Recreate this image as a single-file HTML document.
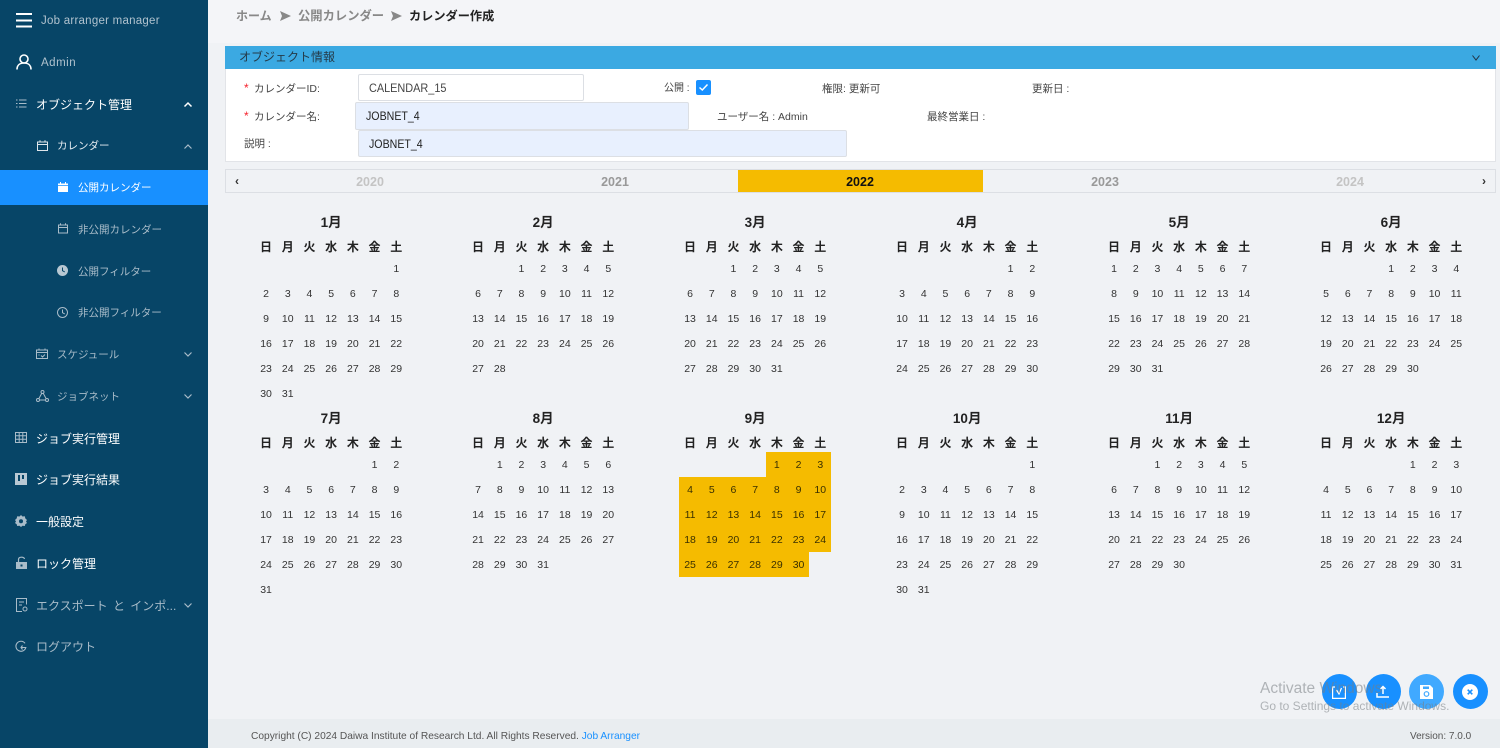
<!DOCTYPE html>
<html lang="ja"><head><meta charset="utf-8"><title>カレンダー作成</title>
<style>
*{box-sizing:border-box}
html,body{margin:0;padding:0;width:1500px;height:748px;overflow:hidden;background:#f0f2f5;font-family:"Liberation Sans","Noto Sans CJK JP",sans-serif;color:#333}
.a{position:absolute;white-space:nowrap}
#side{position:absolute;left:0;top:0;width:208px;height:748px;background:#074567}
.t{position:absolute;white-space:nowrap;line-height:20px;height:18px;font-size:10.5px;color:#a9bcc9}
.w{color:#fff}
.b{font-size:12px}
#active{position:absolute;left:0;top:170px;width:208px;height:35px;background:#1890ff}
svg{position:absolute;overflow:visible}
.m{position:absolute;width:152px}
.mt{height:24px;line-height:26px;text-align:center;font-size:13.5px;font-weight:700;color:#222}
.g{display:grid;grid-template-columns:repeat(7,21.71px);grid-auto-rows:25px;font-size:10.5px;color:#333}
.g i{font-style:normal;display:block;text-align:center;line-height:27px;height:25px}
.hd{margin-top:2.5px;height:19px;grid-auto-rows:19px;font-size:12px;font-weight:700;color:#222}
.hd i{line-height:21px;height:19px}
.h i{background:#f5bb00;color:#3a3000}
.inp{position:absolute;border:1px solid #dcdfe4;border-radius:2px;background:#fff;font-size:12px;line-height:27px;padding-left:10px;color:#444}
.inp span{display:inline-block;transform-origin:0 50%}
.inp.f{background:#e8f0fe;color:#222}
.lab{position:absolute;white-space:nowrap;font-size:10.5px;color:#444;line-height:18px}
.lab b{font-weight:400;color:#f5222d;display:inline-block;width:10px;font-size:12px}
.yr{position:absolute;top:173px;width:100px;text-align:center;font-size:12.5px;font-weight:700;line-height:18px}
.fab{position:absolute;top:674px;width:35px;height:35px;border-radius:50%;background:#1890ff}
</style></head><body>
<div id="side">
<div id="active"></div>
<svg style="left:16px;top:13px" width="16" height="14" fill="none" stroke="#fff" stroke-width="2"><path d="M0 1H16M0 7.500H16M0 13.500H16"/></svg>
<div class="t" style="left:41px;top:11px;letter-spacing:.25px;font-size:11.5px;color:#b0c2ce">Job arranger manager</div>
<svg style="left:16px;top:54px" width="16" height="16" fill="none" stroke="#fff" stroke-width="1.600"><circle cx="8" cy="5" r="4"/><path d="M1 15.500C1 11 4 9 8 9s7 2 7 6.500"/></svg>
<div class="t" style="left:41px;top:53px;letter-spacing:.5px;font-size:11.5px;color:#b0c2ce">Admin</div>
<svg style="left:16px;top:99px" width="11" height="9" fill="none" stroke="#a9bcc9" stroke-width="1"><path d="M3 1H10.500M3 4.500H10.500M3 8H10.500M0 1H1.500M0 4.500H1.500M0 8H1.500"/></svg>
<div class="t w b" style="left:36px;top:94.500px">オブジェクト管理</div>
<svg style="left:184px;top:102px" width="8" height="5" fill="none" stroke="#fff" stroke-width="1.500"><path d="M.5 4.500L4 1L7.500 4.500"/></svg>
<svg style="left:37px;top:140px" width="11" height="11" fill="none" stroke="#dfe6eb" stroke-width="1"><path d="M.5 2H10.500V10.500H.5ZM.5 4.500H10.500M3 .2V2M8 .2V2"/></svg>
<div class="t w" style="left:57px;top:136px;color:#e4ebf0">カレンダー</div>
<svg style="left:184px;top:144px" width="8" height="5" fill="none" stroke="#a9bcc9" stroke-width="1.200"><path d="M.5 4.500L4 1L7.500 4.500"/></svg>
<svg style="left:58px;top:182px" width="10" height="10"><path d="M0 1.500H10V3.200H0ZM0 4H10V10H0ZM2 0H3V2H2ZM7 0H8V2H7Z" fill="#fff"/></svg>
<div class="t w" style="left:78px;top:178px">公開カレンダー</div>
<svg style="left:58px;top:223px" width="10" height="11" fill="none" stroke="#a9bcc9" stroke-width="1"><path d="M.5 2H9.500V10H.5ZM.5 4.500H9.500M2.500 .2V2M7.500 .2V2"/></svg>
<div class="t" style="left:78px;top:220px">非公開カレンダー</div>
<svg style="left:57px;top:265px" width="11" height="11"><circle cx="5.500" cy="5.500" r="5.500" fill="#b8c8d3"/><path d="M5.500 2.500V5.700L7.800 7" stroke="#074567" fill="none"/></svg>
<div class="t" style="left:78px;top:262px">公開フィルター</div>
<svg style="left:57px;top:307px" width="11" height="11" fill="none" stroke="#a9bcc9" stroke-width="1"><circle cx="5.500" cy="5.500" r="5"/><path d="M5.500 2.500V5.700L7.800 7"/></svg>
<div class="t" style="left:78px;top:303px">非公開フィルター</div>
<svg style="left:36px;top:348px" width="12" height="12" fill="none" stroke="#a9bcc9" stroke-width="1"><path d="M.5 2H11.500V10.500H.5ZM.5 4.500H11.500M3 .5V2.500M9 .5V2.500M5 7.500L6.500 9L9 6.500M2.500 7H3.500"/></svg>
<div class="t" style="left:57px;top:345px">スケジュール</div>
<svg style="left:184px;top:352px" width="8" height="5" fill="none" stroke="#a9bcc9" stroke-width="1.200"><path d="M.5.5L4 4L7.500.5"/></svg>
<svg style="left:36px;top:390px" width="13" height="12" fill="none" stroke="#a9bcc9" stroke-width="1"><circle cx="6.500" cy="2" r="1.500"/><circle cx="2" cy="10" r="1.500"/><circle cx="11" cy="10" r="1.500"/><path d="M5.800 3.300L2.800 8.700M7.200 3.300L10.200 8.700M3.500 10H9.500"/></svg>
<div class="t" style="left:57px;top:387px">ジョブネット</div>
<svg style="left:184px;top:394px" width="8" height="5" fill="none" stroke="#a9bcc9" stroke-width="1.200"><path d="M.5.5L4 4L7.500.5"/></svg>
<svg style="left:15px;top:432px" width="12" height="11" fill="none" stroke="#a9bcc9" stroke-width="1"><path d="M.5.500H11.500V10.500H.5ZM.5 3.800H11.500M.5 7.200H11.500M4.200 .5V10.500M7.800 .5V10.500"/></svg>
<div class="t w b" style="left:36px;top:429px">ジョブ実行管理</div>
<svg style="left:15px;top:473px" width="12" height="12"><path d="M0 0H12V12H0Z" fill="#b8c8d3"/><path d="M3 2H5V8H3ZM7 2H9V6H7Z" fill="#074567"/></svg>
<div class="t w b" style="left:36px;top:470px">ジョブ実行結果</div>
<svg style="left:15px;top:515px" width="12" height="12"><path d="M6 0L7.500 1.500L9.800 1.200L10.300 3.400L12 5L11 6.500L12 8L10.300 9.200L9.800 11L7.500 10.700L6 12L4.500 10.700L2.200 11L1.700 9.200L0 8L1 6.500L0 5L1.700 3.400L2.200 1.200L4.500 1.500Z" fill="#a9bcc9"/><circle cx="6" cy="6.300" r="2" fill="#074567"/></svg>
<div class="t w b" style="left:36px;top:512px">一般設定</div>
<svg style="left:16px;top:556px" width="11" height="13"><path d="M0 6H11V13H0Z" fill="#a9bcc9"/><path d="M2.500 6V3.500C2.500 .5 8 .5 8.500 3" fill="none" stroke="#a9bcc9" stroke-width="1.200"/><rect x="4.500" y="8.500" width="2" height="2" fill="#074567"/></svg>
<div class="t w b" style="left:36px;top:554px">ロック管理</div>
<svg style="left:16px;top:598px" width="12" height="14" fill="none" stroke="#a9bcc9" stroke-width="1"><path d="M10.500 6.500V.5H.5V13.500H6M3 4H8M3 7H6"/><circle cx="9" cy="11" r="2"/></svg>
<div class="t b" style="left:36px;top:596px;word-spacing:2px">エクスポート と インポ...</div>
<svg style="left:184px;top:603px" width="8" height="5" fill="none" stroke="#a9bcc9" stroke-width="1.200"><path d="M.5.5L4 4L7.500.5"/></svg>
<svg style="left:15px;top:641px" width="12" height="11" fill="none" stroke="#a9bcc9" stroke-width="1.100"><path d="M10 2.300A5 5 0 1 0 10.800 6.500H6M7.500 4.500L6 6.500L7.500 8.500"/></svg>
<div class="t b" style="left:36px;top:637px">ログアウト</div>
</div>

<div class="a" style="left:208px;top:0;width:1292px;height:43px;background:#f4f5f8"></div>
<div class="a" style="left:236px;top:8px;font-size:12px;line-height:17px;color:#888;font-weight:700">ホーム</div>
<svg style="left:280px;top:11px" width="11" height="10"><path d="M0 0L11 5L0 10L2 5Z" fill="#888"/></svg>
<div class="a" style="left:298px;top:8px;font-size:12.300px;line-height:17px;color:#888;font-weight:700">公開カレンダー</div>
<svg style="left:391px;top:11px" width="11" height="10"><path d="M0 0L11 5L0 10L2 5Z" fill="#888"/></svg>
<div class="a" style="left:409px;top:8px;font-size:12.200px;line-height:17px;color:#222;font-weight:700">カレンダー作成</div>

<div class="a" style="left:225px;top:46px;width:1271px;height:116px;background:#fff;border:1px solid #e2e4e8;border-top:0"></div>
<div class="a" style="left:225px;top:46px;width:1271px;height:23px;background:#3ba9e2;font-size:12px;line-height:22px;padding-left:14px;color:#243a48">オブジェクト情報</div>
<svg style="left:1472px;top:55px" width="8" height="6" fill="none" stroke="#234" stroke-width="1"><path d="M.5.5L4 5L7.500.5"/></svg>
<div class="lab" style="left:244px;top:79px"><b>*</b>カレンダーID:</div>
<div class="lab" style="left:244px;top:107px"><b>*</b>カレンダー名:</div>
<div class="lab" style="left:244px;top:135px">説明 :</div>
<div class="inp" style="left:358px;top:74px;width:226px;height:27px"><span style="transform:scaleX(.907)">CALENDAR_15</span></div>
<div class="inp f" style="left:355px;top:102px;width:334px;height:28px"><span style="transform:scaleX(.885)">JOBNET_4</span></div>
<div class="inp f" style="left:358px;top:130px;width:489px;height:27px"><span style="transform:scaleX(.885)">JOBNET_4</span></div>
<div class="lab" style="left:664px;top:80px;font-size:10px">公開 :</div>
<div class="a" style="left:696px;top:80px;width:15px;height:15px;background:#1890ff;border-radius:2px"></div>
<svg style="left:699px;top:84px" width="9" height="7" fill="none" stroke="#fff" stroke-width="1.500"><path d="M.5 3.500L3.300 6L8.500.5"/></svg>
<div class="lab" style="left:822px;top:80px;font-size:10.500px">権限: 更新可</div>
<div class="lab" style="left:1032px;top:80px;font-size:10.500px">更新日 :</div>
<div class="lab" style="left:717px;top:108px;font-size:10.500px">ユーザー名 : Admin</div>
<div class="lab" style="left:927px;top:108px;font-size:10.500px">最終営業日 :</div>

<div class="a" style="left:225px;top:169px;width:1271px;height:24px;border:1px solid #dcdfe4"></div>
<div class="a" style="left:738px;top:170px;width:245px;height:22px;background:#f5bb00"></div>
<div class="a" style="left:235px;top:172px;font-size:12px;line-height:18px;font-weight:700;color:#333">‹</div>
<div class="a" style="left:1482px;top:172px;font-size:12px;line-height:18px;font-weight:700;color:#333">›</div>
<div class="yr" style="left:320px;color:#c4c4c4">2020</div>
<div class="yr" style="left:565px;color:#999">2021</div>
<div class="yr" style="left:810px;color:#111">2022</div>
<div class="yr" style="left:1055px;color:#999">2023</div>
<div class="yr" style="left:1300px;color:#c4c4c4">2024</div>

<div class="m" style="left:255.200px;top:210px"><div class="mt">1月</div><div class="g hd"><i>日</i><i>月</i><i>火</i><i>水</i><i>木</i><i>金</i><i>土</i></div><div class="g"><i style="grid-column-start:7">1</i><i>2</i><i>3</i><i>4</i><i>5</i><i>6</i><i>7</i><i>8</i><i>9</i><i>10</i><i>11</i><i>12</i><i>13</i><i>14</i><i>15</i><i>16</i><i>17</i><i>18</i><i>19</i><i>20</i><i>21</i><i>22</i><i>23</i><i>24</i><i>25</i><i>26</i><i>27</i><i>28</i><i>29</i><i>30</i><i>31</i></div></div>
<div class="m" style="left:467.200px;top:210px"><div class="mt">2月</div><div class="g hd"><i>日</i><i>月</i><i>火</i><i>水</i><i>木</i><i>金</i><i>土</i></div><div class="g"><i style="grid-column-start:3">1</i><i>2</i><i>3</i><i>4</i><i>5</i><i>6</i><i>7</i><i>8</i><i>9</i><i>10</i><i>11</i><i>12</i><i>13</i><i>14</i><i>15</i><i>16</i><i>17</i><i>18</i><i>19</i><i>20</i><i>21</i><i>22</i><i>23</i><i>24</i><i>25</i><i>26</i><i>27</i><i>28</i></div></div>
<div class="m" style="left:679.200px;top:210px"><div class="mt">3月</div><div class="g hd"><i>日</i><i>月</i><i>火</i><i>水</i><i>木</i><i>金</i><i>土</i></div><div class="g"><i style="grid-column-start:3">1</i><i>2</i><i>3</i><i>4</i><i>5</i><i>6</i><i>7</i><i>8</i><i>9</i><i>10</i><i>11</i><i>12</i><i>13</i><i>14</i><i>15</i><i>16</i><i>17</i><i>18</i><i>19</i><i>20</i><i>21</i><i>22</i><i>23</i><i>24</i><i>25</i><i>26</i><i>27</i><i>28</i><i>29</i><i>30</i><i>31</i></div></div>
<div class="m" style="left:891.200px;top:210px"><div class="mt">4月</div><div class="g hd"><i>日</i><i>月</i><i>火</i><i>水</i><i>木</i><i>金</i><i>土</i></div><div class="g"><i style="grid-column-start:6">1</i><i>2</i><i>3</i><i>4</i><i>5</i><i>6</i><i>7</i><i>8</i><i>9</i><i>10</i><i>11</i><i>12</i><i>13</i><i>14</i><i>15</i><i>16</i><i>17</i><i>18</i><i>19</i><i>20</i><i>21</i><i>22</i><i>23</i><i>24</i><i>25</i><i>26</i><i>27</i><i>28</i><i>29</i><i>30</i></div></div>
<div class="m" style="left:1103.200px;top:210px"><div class="mt">5月</div><div class="g hd"><i>日</i><i>月</i><i>火</i><i>水</i><i>木</i><i>金</i><i>土</i></div><div class="g"><i>1</i><i>2</i><i>3</i><i>4</i><i>5</i><i>6</i><i>7</i><i>8</i><i>9</i><i>10</i><i>11</i><i>12</i><i>13</i><i>14</i><i>15</i><i>16</i><i>17</i><i>18</i><i>19</i><i>20</i><i>21</i><i>22</i><i>23</i><i>24</i><i>25</i><i>26</i><i>27</i><i>28</i><i>29</i><i>30</i><i>31</i></div></div>
<div class="m" style="left:1315.200px;top:210px"><div class="mt">6月</div><div class="g hd"><i>日</i><i>月</i><i>火</i><i>水</i><i>木</i><i>金</i><i>土</i></div><div class="g"><i style="grid-column-start:4">1</i><i>2</i><i>3</i><i>4</i><i>5</i><i>6</i><i>7</i><i>8</i><i>9</i><i>10</i><i>11</i><i>12</i><i>13</i><i>14</i><i>15</i><i>16</i><i>17</i><i>18</i><i>19</i><i>20</i><i>21</i><i>22</i><i>23</i><i>24</i><i>25</i><i>26</i><i>27</i><i>28</i><i>29</i><i>30</i></div></div>
<div class="m" style="left:255.200px;top:406px"><div class="mt">7月</div><div class="g hd"><i>日</i><i>月</i><i>火</i><i>水</i><i>木</i><i>金</i><i>土</i></div><div class="g"><i style="grid-column-start:6">1</i><i>2</i><i>3</i><i>4</i><i>5</i><i>6</i><i>7</i><i>8</i><i>9</i><i>10</i><i>11</i><i>12</i><i>13</i><i>14</i><i>15</i><i>16</i><i>17</i><i>18</i><i>19</i><i>20</i><i>21</i><i>22</i><i>23</i><i>24</i><i>25</i><i>26</i><i>27</i><i>28</i><i>29</i><i>30</i><i>31</i></div></div>
<div class="m" style="left:467.200px;top:406px"><div class="mt">8月</div><div class="g hd"><i>日</i><i>月</i><i>火</i><i>水</i><i>木</i><i>金</i><i>土</i></div><div class="g"><i style="grid-column-start:2">1</i><i>2</i><i>3</i><i>4</i><i>5</i><i>6</i><i>7</i><i>8</i><i>9</i><i>10</i><i>11</i><i>12</i><i>13</i><i>14</i><i>15</i><i>16</i><i>17</i><i>18</i><i>19</i><i>20</i><i>21</i><i>22</i><i>23</i><i>24</i><i>25</i><i>26</i><i>27</i><i>28</i><i>29</i><i>30</i><i>31</i></div></div>
<div class="m" style="left:679.200px;top:406px"><div class="mt">9月</div><div class="g hd"><i>日</i><i>月</i><i>火</i><i>水</i><i>木</i><i>金</i><i>土</i></div><div class="g h"><i style="grid-column-start:5">1</i><i>2</i><i>3</i><i>4</i><i>5</i><i>6</i><i>7</i><i>8</i><i>9</i><i>10</i><i>11</i><i>12</i><i>13</i><i>14</i><i>15</i><i>16</i><i>17</i><i>18</i><i>19</i><i>20</i><i>21</i><i>22</i><i>23</i><i>24</i><i>25</i><i>26</i><i>27</i><i>28</i><i>29</i><i>30</i></div></div>
<div class="m" style="left:891.200px;top:406px"><div class="mt">10月</div><div class="g hd"><i>日</i><i>月</i><i>火</i><i>水</i><i>木</i><i>金</i><i>土</i></div><div class="g"><i style="grid-column-start:7">1</i><i>2</i><i>3</i><i>4</i><i>5</i><i>6</i><i>7</i><i>8</i><i>9</i><i>10</i><i>11</i><i>12</i><i>13</i><i>14</i><i>15</i><i>16</i><i>17</i><i>18</i><i>19</i><i>20</i><i>21</i><i>22</i><i>23</i><i>24</i><i>25</i><i>26</i><i>27</i><i>28</i><i>29</i><i>30</i><i>31</i></div></div>
<div class="m" style="left:1103.200px;top:406px"><div class="mt">11月</div><div class="g hd"><i>日</i><i>月</i><i>火</i><i>水</i><i>木</i><i>金</i><i>土</i></div><div class="g"><i style="grid-column-start:3">1</i><i>2</i><i>3</i><i>4</i><i>5</i><i>6</i><i>7</i><i>8</i><i>9</i><i>10</i><i>11</i><i>12</i><i>13</i><i>14</i><i>15</i><i>16</i><i>17</i><i>18</i><i>19</i><i>20</i><i>21</i><i>22</i><i>23</i><i>24</i><i>25</i><i>26</i><i>27</i><i>28</i><i>29</i><i>30</i></div></div>
<div class="m" style="left:1315.200px;top:406px"><div class="mt">12月</div><div class="g hd"><i>日</i><i>月</i><i>火</i><i>水</i><i>木</i><i>金</i><i>土</i></div><div class="g"><i style="grid-column-start:5">1</i><i>2</i><i>3</i><i>4</i><i>5</i><i>6</i><i>7</i><i>8</i><i>9</i><i>10</i><i>11</i><i>12</i><i>13</i><i>14</i><i>15</i><i>16</i><i>17</i><i>18</i><i>19</i><i>20</i><i>21</i><i>22</i><i>23</i><i>24</i><i>25</i><i>26</i><i>27</i><i>28</i><i>29</i><i>30</i><i>31</i></div></div>

<div class="a" style="left:208px;top:719px;width:1292px;height:29px;background:#e9edf0"></div>
<div class="a" style="left:251px;top:729px;font-size:10.200px;line-height:15px;color:#555">Copyright (C) 2024 Daiwa Institute of Research Ltd. All Rights Reserved. <span style="color:#1890ff">Job Arranger</span></div>
<div class="a" style="left:1410px;top:729px;font-size:10px;line-height:15px;color:#555">Version: 7.0.0</div>

<div class="fab" style="left:1321.500px"></div>
<div class="fab" style="left:1365.500px"></div>
<div class="fab" style="left:1409px;background:#40a9ff"></div>
<div class="fab" style="left:1452.500px"></div>
<svg style="left:1332px;top:685px" width="14" height="14" fill="none" stroke="#fff" stroke-width="1.200"><path d="M3 2H.6V13.400H13.400V2H11M4.500 5L7 9L9.500 3"/></svg>
<svg style="left:1375px;top:685px" width="15" height="14" fill="none" stroke="#fff" stroke-width="1.500"><path d="M2 8V12H14M8 9V1.500M5.500 4L8 1.500L10.500 4"/></svg>
<svg style="left:1420px;top:685px" width="13" height="14"><path d="M0 0H10L13 3V14H0Z" fill="#fff"/><rect x="3" y="1.500" width="6" height="2.500" fill="#40a9ff"/><circle cx="6.500" cy="9" r="2.300" fill="none" stroke="#40a9ff" stroke-width="1.200"/></svg>
<svg style="left:1462px;top:684px" width="16" height="16"><circle cx="8" cy="8" r="8" fill="#fff"/><path d="M5.700 5.700L10.300 10.300M10.300 5.700L5.700 10.300" stroke="#1890ff" stroke-width="1.600"/></svg>

<div class="a" style="left:1260px;top:679px;font-size:15.500px;line-height:19px;color:rgba(120,125,130,.55)">Activate Windows</div>
<div class="a" style="left:1260px;top:699px;font-size:12px;line-height:15px;color:rgba(120,125,130,.55)">Go to Settings to activate Windows.</div>
</body></html>
